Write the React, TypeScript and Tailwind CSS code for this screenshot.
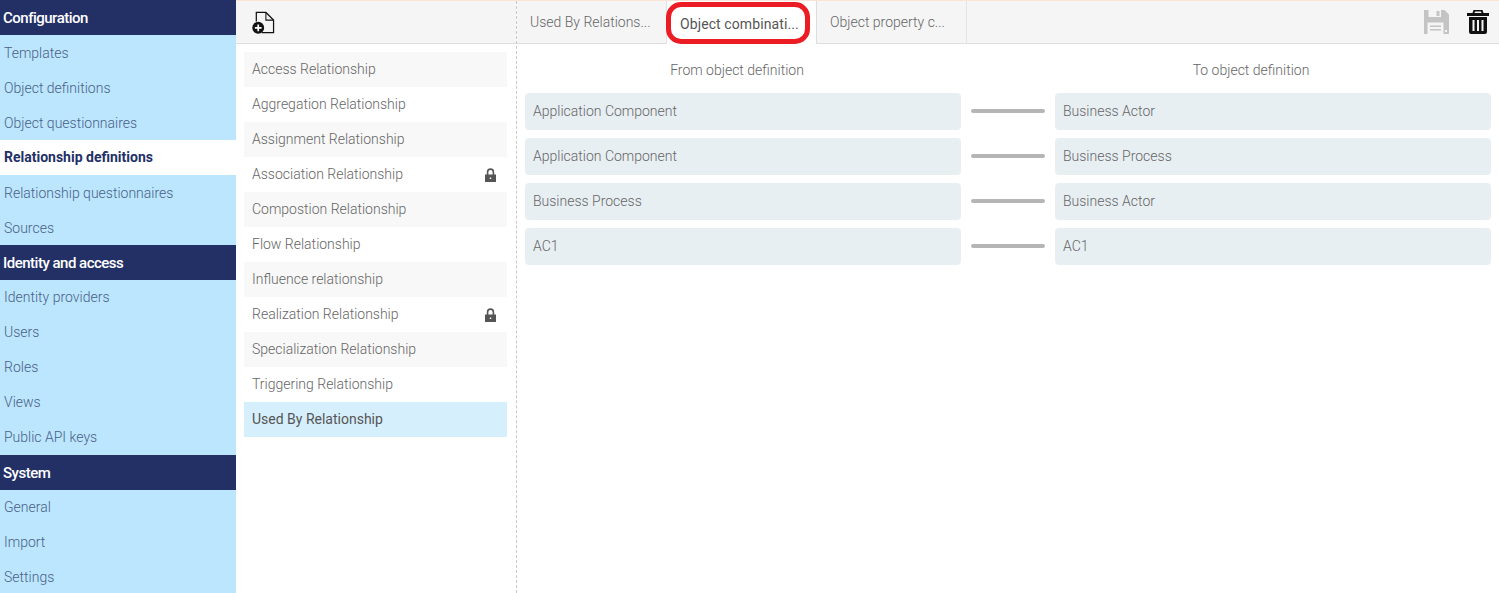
const sidebar = [
  {
    title: "Configuration",
    items: ["Templates", "Object definitions", "Object questionnaires", "Relationship definitions", "Relationship questionnaires", "Sources"],
  },
  {
    title: "Identity and access",
    items: ["Identity providers", "Users", "Roles", "Views", "Public API keys"],
  },
  {
    title: "System",
    items: ["General", "Import", "Settings"],
  },
];

const relationships = [
  { name: "Access Relationship" },
  { name: "Aggregation Relationship" },
  { name: "Assignment Relationship" },
  { name: "Association Relationship", locked: true },
  { name: "Compostion Relationship" },
  { name: "Flow Relationship" },
  { name: "Influence relationship" },
  { name: "Realization Relationship", locked: true },
  { name: "Specialization Relationship" },
  { name: "Triggering Relationship" },
  { name: "Used By Relationship" },
];

const combinations = [
  ["Application Component", "Business Actor"],
  ["Application Component", "Business Process"],
  ["Business Process", "Business Actor"],
  ["AC1", "AC1"],
];

function Sidebar() {
  return (
    <div className="w-[236px] shrink-0 bg-[#bbe6fd]">
      {sidebar.map((group, g) => (
        <div key={group.title}>
          <div className="flex h-[35px] items-center bg-[#233066] pl-[3px] pt-[2px] text-[15px] font-medium tracking-[-0.5px] text-white">
            {group.title}
          </div>
          {group.items.map((item) => (
            <div
              key={item}
              className={
                item === "Relationship definitions"
                  ? "flex h-[35px] items-center bg-white pl-[4px] text-[14px] font-bold text-[#233066]"
                  : g === 0
                    ? "flex h-[35px] items-center pl-[4px] pt-px text-[14px] font-light text-[#4a5f88]"
                    : "flex h-[35px] items-center pl-[4px] text-[14px] font-light text-[#4a5f88]"
              }
            >
              {item}
            </div>
          ))}
        </div>
      ))}
    </div>
  );
}

function NewFileIcon() {
  return (
    <svg width="23" height="23" viewBox="0 0 24 24" fill="none">
      <path d="M4.5 11V1.5H14.5L22.5 9.5V22.5H10" stroke="#111" strokeWidth="1.3" />
      <path d="M14.5 1.5V9.5H22.5" stroke="#111" strokeWidth="1.1" />
      <circle cx="6.5" cy="17.5" r="6.2" fill="#111" />
      <path d="M6.5 14V21M3 17.5H10" stroke="#fff" strokeWidth="1.8" />
    </svg>
  );
}

function SaveIcon() {
  return (
    <svg width="25" height="24" viewBox="0 0 25 24">
      <path fill="#c4c4c4" d="M0 0H20.5L25 4.5V24H0Z" />
      <path fill="#f5f5f5" d="M4.5 0H17V7H4.5Z" />
      <path fill="#c4c4c4" d="M12.5 1H15.5V6H12.5Z" />
      <path fill="#f5f5f5" d="M3.5 12.5H19.5V24H3.5Z" />
      <path fill="#c4c4c4" d="M6 15.5H17V17H6ZM6 19H17V20.5H6Z" />
      <path fill="#f5f5f5" d="M21 20H23V22H21Z" />
    </svg>
  );
}

function TrashIcon() {
  return (
    <svg width="22" height="24" viewBox="0 0 22 24" fill="#111">
      <path fillRule="evenodd" d="M6.5 0H15.5L16.5 3H22V6H0V3H5.5ZM8 1.5L7.5 3H14.5L14 1.5Z" />
      <path
        fillRule="evenodd"
        d="M2 7H20V22A2 2 0 0 1 18 24H4A2 2 0 0 1 2 22ZM5.5 10V21H7.5V10ZM10 10V21H12V10ZM14.5 10V21H16.5V10Z"
      />
    </svg>
  );
}

function LockIcon() {
  return (
    <svg width="11" height="14" viewBox="0 0 11 14" fill="#555">
      <path d="M1.8 7V4a3.7 3.7 0 0 1 7.4 0V7H7.6V4a2.1 2.1 0 0 0-4.2 0V7Z" />
      <path fillRule="evenodd" d="M0 6.5H11V14H0ZM4.8 9.6V11H6.2V9.6Z" />
    </svg>
  );
}

function RelationshipList() {
  return (
    <div className="flex w-[280px] shrink-0 flex-col">
      <div className="flex h-[43px] items-center border-b border-[#dedede] bg-[#f5f5f5] pl-[16px]">
        <NewFileIcon />
      </div>
      <div className="flex flex-col pl-[8px] pr-[9px] pt-[8px]">
        {relationships.map((rel, i) => (
          <div
            key={rel.name}
            className={`flex h-[35px] items-center justify-between pl-[8px] pr-[11px] text-[14px] ${
              rel.name === "Used By Relationship"
                ? "bg-[#d5effc] font-normal text-[#555]"
                : i % 2 === 0
                  ? "bg-[#f8f8f8] font-light text-[#666]"
                  : "font-light text-[#666]"
            }`}
          >
            <span>{rel.name}</span>
            {rel.locked && <LockIcon />}
          </div>
        ))}
      </div>
    </div>
  );
}

function Tab({ label, active }: { label: string; active?: boolean }) {
  return (
    <div
      className={
        active
          ? "relative flex h-[43px] w-[150px] items-center border-r border-[#dedede] bg-white pl-[13px] pt-[4px] text-[14px] tracking-[0.1px] text-[#555]"
          : "flex h-[42px] w-[150px] items-center border-r border-[#e4e4e4] pl-[13px] text-[14px] font-light text-[#666]"
      }
    >
      {label}
      {active && (
        <div className="absolute -left-px top-px h-[42px] w-[144px] rounded-[15px] border-[5px] border-[#ec1c24]" />
      )}
    </div>
  );
}

function ObjectField({ label }: { label: string }) {
  return (
    <div className="flex h-[37px] flex-1 items-center rounded-[4px] bg-[#e8eff3] pl-[8px] text-[14px] font-light text-[#666]">
      {label}
    </div>
  );
}

function Detail() {
  return (
    <div className="flex min-w-0 flex-1 flex-col border-l border-dashed border-[#c8c8c8]">
      <div className="flex h-[43px] items-start justify-between border-b border-[#dedede] bg-[#f5f5f5]">
        <div className="flex">
          <Tab label="Used By Relations..." />
          <Tab label="Object combinati..." active />
          <Tab label="Object property c..." />
        </div>
        <div className="flex items-center gap-[18px] pr-[10px] pt-[9px]">
          <SaveIcon />
          <TrashIcon />
        </div>
      </div>
      <div className="flex flex-col pl-[8px] pr-[8px]">
        <div className="flex h-[49px] items-center pt-[3px] text-[14px] font-light text-[#666]">
          <div className="w-[424px] text-center">From object definition</div>
          <div className="flex-1 pl-[62px] text-center">To object definition</div>
        </div>
        <div className="flex flex-col gap-[8px]">
          {combinations.map(([from, to], i) => (
            <div key={i} className="flex items-center">
              <ObjectField label={from} />
              <div className="mx-[10px] mb-[2px] h-[4px] w-[74px] rounded-full bg-[#b5b5b5]" />
              <ObjectField label={to} />
            </div>
          ))}
        </div>
      </div>
    </div>
  );
}

export default function App() {
  return (
    <div className="flex h-[593px] w-[1499px] overflow-hidden bg-white font-['Roboto',sans-serif]">
      <Sidebar />
      <div className="flex min-w-0 flex-1 flex-col">
        <div className="h-px bg-[#fbe3d6]" />
        <div className="flex min-h-0 flex-1">
          <RelationshipList />
          <Detail />
        </div>
      </div>
    </div>
  );
}
